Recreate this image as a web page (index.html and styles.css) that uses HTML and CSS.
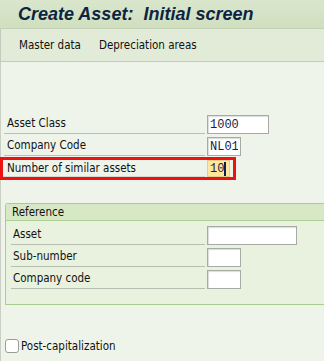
FILE: index.html
```html
<!DOCTYPE html>
<html lang="en">

<head>
	<meta charset="UTF-8">
	<meta name="viewport" content="width=device-width, initial-scale=1.0">
	<title>Create Asset: Initial screen</title>
	<link rel="stylesheet" href="styles.css">
</head>

<body>
	<h1 class="title-bar">Create Asset:&nbsp; Initial screen</h1>
	<nav class="toolbar">
		<span class="toolbar-item">Master data</span>
		<span class="toolbar-item">Depreciation areas</span>
	</nav>
	<main class="screen">
		<div class="fields">
			<div class="field">
				<label class="field-label">Asset Class</label>
				<input class="field-input wide" type="text" value="1000">
			</div>
			<div class="field">
				<label class="field-label">Company Code</label>
				<input class="field-input short" type="text" value="NL01">
			</div>
			<div class="field marked">
				<label class="field-label">Number of similar assets</label>
				<div class="field-input tiny active">10<span class="caret"></span></div>
			</div>
		</div>

		<div class="group">
			<div class="group-title">Reference</div>
			<div class="field">
				<label class="field-label">Asset</label>
				<input class="field-input long" type="text">
			</div>
			<div class="field">
				<label class="field-label">Sub-number</label>
				<input class="field-input short" type="text">
			</div>
			<div class="field">
				<label class="field-label">Company code</label>
				<input class="field-input short" type="text">
			</div>
		</div>

		<label class="check">
			<span class="check-box"></span>
			<span>Post-capitalization</span>
		</label>
	</main>
</body>

</html>
```

FILE: styles.css
```css
* {
	margin: 0;
	padding: 0;
	box-sizing: border-box;
}

body {
	background: #eff4ea;
	color: #111;
	font-family: "DejaVu Sans Condensed", "DejaVu Sans", Tahoma, sans-serif;
	font-stretch: condensed;
	font-size: 11.5px;
	overflow: hidden;
}

.title-bar {
	height: 29px;
	padding-left: 18px;
	line-height: 29px;
	font-family: "Liberation Sans", Arial, sans-serif;
	font-stretch: normal;
	font-size: 18px;
	font-weight: bold;
	font-style: italic;
	color: #0c2442;
	background: linear-gradient(#d9e6cc, #cfdfbf);
	border-bottom: 1px solid #c3d2b4;
}

.toolbar {
	display: flex;
	gap: 18px;
	height: 33px;
	padding-left: 18px;
	align-items: center;
	background: #e2ebd7;
	border-bottom: 1px solid #c4cabd;
	border-left: 1px solid #c4cabd;
}

.screen {
	min-height: 300px;
	border-left: 1px solid #c9cfc3;
	padding-top: 50px;
}

.fields {
	padding-left: 3px;
}

.field {
	display: flex;
	align-items: flex-end;
	height: 22px;
}

.field-label {
	flex: none;
	width: 201px;
	height: 20px;
	padding-left: 3px;
	line-height: 19px;
	border-bottom: 1px solid #b9beb3;
}

.field-input {
	flex: none;
	height: 19px;
	margin-left: 2px;
	padding: 0 2px;
	font-family: "Liberation Mono", "Courier New", monospace;
	font-stretch: normal;
	font-size: 12px;
	color: #1b1b4a;
	background: #fff;
	border: 1px solid #a7aaa5;
	box-shadow: inset 1px 1px 1px #dcdcdc;
	outline: none;
}

.wide {
	width: 62px;
}

.long {
	width: 90px;
}

.short {
	width: 34px;
}

.tiny {
	width: 23px;
}

/* highlighted row: red frame drawn as the row's own border */
.marked {
	width: 236px;
	height: 23px;
	margin: 1px 0 0 -4px;
	align-items: stretch;
	border: 3px solid #ee1111;
}

.marked .field-label {
	width: 202px;
	height: auto;
	padding-left: 4px;
	line-height: 16px;
	border-bottom-color: #d6d9d2;
}

.active {
	display: flex;
	align-items: center;
	height: auto;
	background: #fde89c;
	border-color: #e3d08a;
	box-shadow: none;
}

.caret {
	width: 2px;
	height: 14px;
	background: #0c1c5a;
}

.group {
	margin: 23px 0 0 4px;
	padding-bottom: 15px;
	background: #e9f1df;
	border: 1px solid #a9cd8f;
	border-right: none;
	border-radius: 3px 0 0 0;
}

.group .field {
	padding-left: 5px;
}

.group .field-label {
	width: 194px;
	padding-left: 2px;
}

.group-title {
	height: 17px;
	margin-bottom: 2px;
	padding-left: 6px;
	line-height: 16px;
	background: #d7e8c6;
	border-bottom: 1px solid #acd093;
}

.check {
	display: flex;
	align-items: center;
	gap: 2px;
	margin: 34px 0 0 4px;
}

.check-box {
	width: 14px;
	height: 14px;
	background: #fff;
	border: 1px solid #9a9d98;
	border-radius: 3px;
}
```
